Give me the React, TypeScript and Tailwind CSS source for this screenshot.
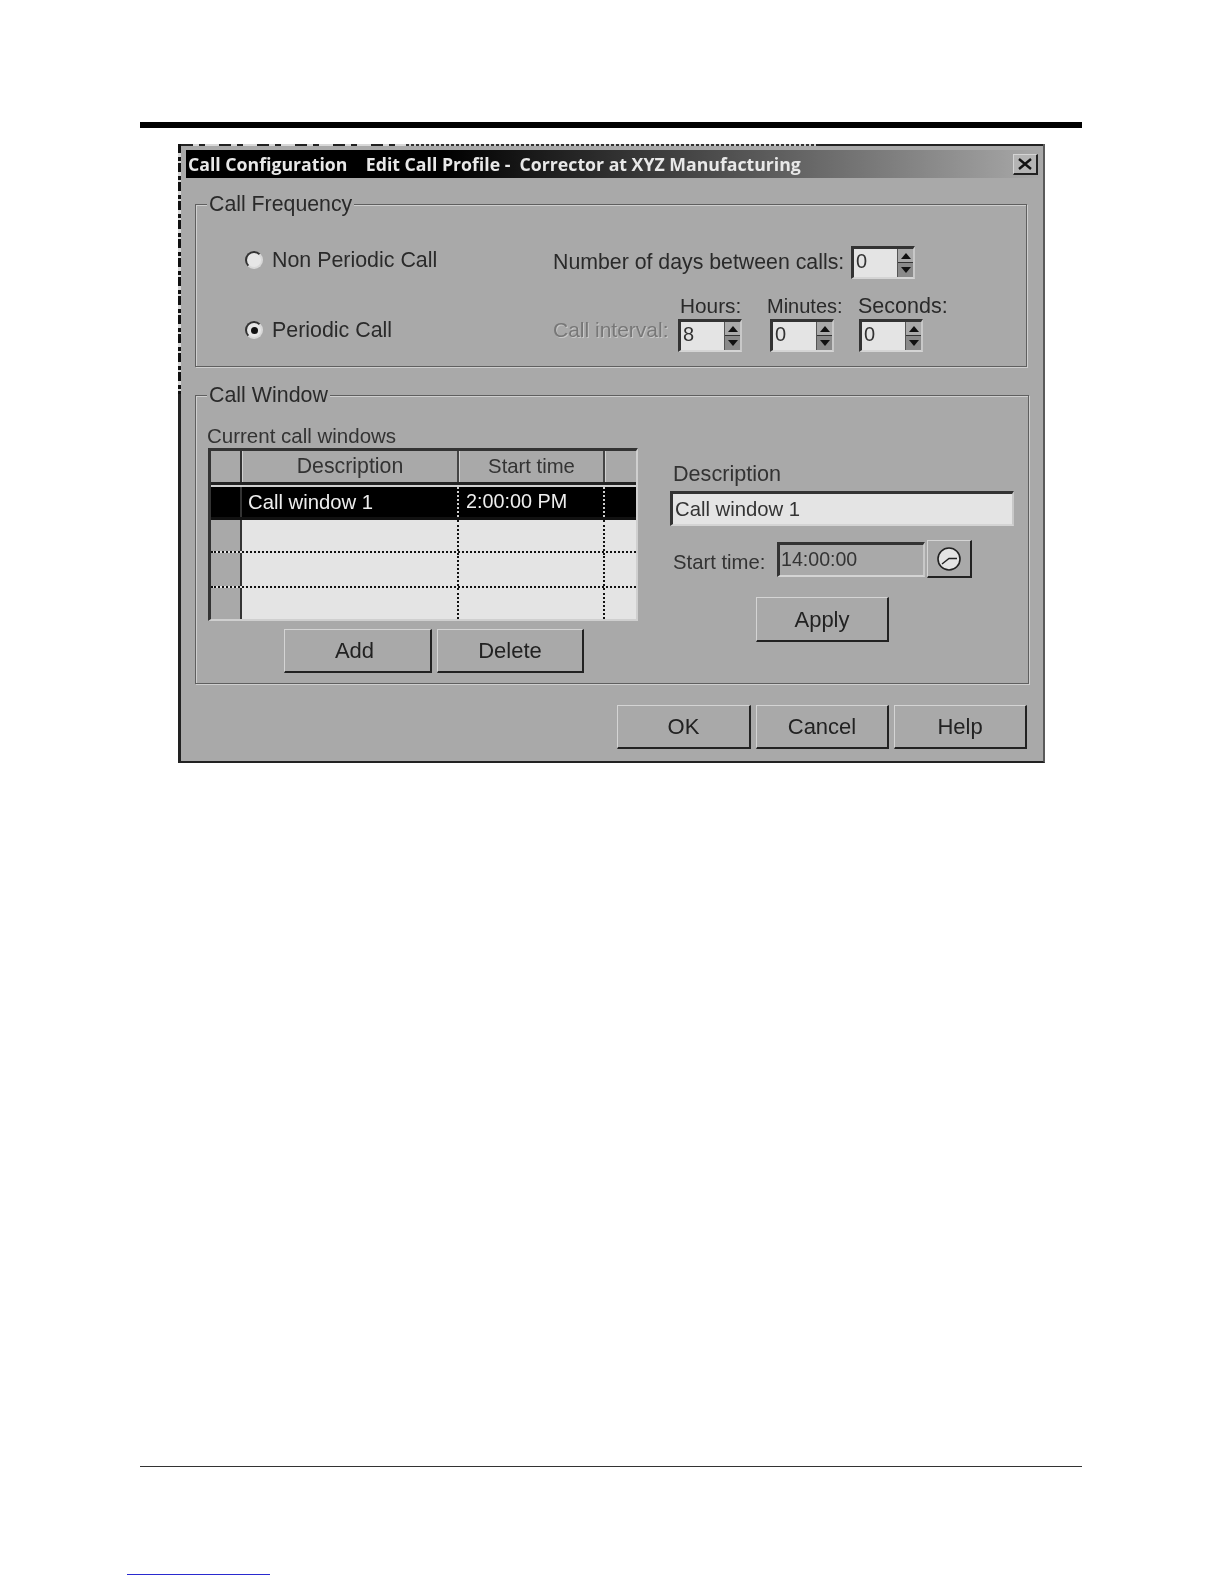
import type { ReactNode } from "react";

const bevelOut =
  "border border-t-[#d4d4d4] border-l-[#d4d4d4] border-r-[#222] border-b-[#222] border-b-2 border-r-2";
const sunken =
  "border-t-[3px] border-l-[3px] border-r-2 border-b-2 border-t-[#333] border-l-[#333] border-r-[#c8c8c8] border-b-[#d4d4d4]";

const emptyRows = ["h-[33px] border-b-2", "h-[35px] border-b-2", "h-[31px]"];

function Button({ label, className }: { label: string; className: string }) {
  return (
    <button
      type="button"
      className={`flex items-center justify-center bg-[#a9a9a9] text-[22px] text-[#222] ${bevelOut} ${className}`}
    >
      {label}
    </button>
  );
}

function Group({
  title,
  titleSize,
  className,
  children,
}: {
  title: string;
  titleSize: string;
  className: string;
  children: ReactNode;
}) {
  return (
    <fieldset
      className={`relative border border-[#5f5f5f] shadow-[inset_1px_1px_0_#cfcfcf,1px_1px_0_#cfcfcf] ${className}`}
    >
      <span className={`absolute -top-[14px] left-[11px] bg-[#a9a9a9] px-[2px] leading-[26px] text-[#2a2a2a] ${titleSize}`}>
        {title}
      </span>
      {children}
    </fieldset>
  );
}

function Spinner({ value }: { value: string }) {
  return (
    <div className={`flex h-[33px] w-[64px] items-stretch bg-[#e4e4e4] ${sunken}`}>
      <span className="flex-1 pl-[2px] text-[20px] leading-[24px] text-[#333]">{value}</span>
      <div className="flex w-[16px] flex-col border-l border-[#555] bg-[#a9a9a9]">
        <span className="flex h-1/2 items-center justify-center border-b border-[#333]">
          <svg width="10" height="6" viewBox="0 0 10 6">
            <path d="M5 0 L10 6 H0 Z" fill="#111" />
          </svg>
        </span>
        <span className="flex h-1/2 items-center justify-center bg-[#8a8a8a]">
          <svg width="10" height="6" viewBox="0 0 10 6">
            <path d="M0 0 H10 L5 6 Z" fill="#111" />
          </svg>
        </span>
      </div>
    </div>
  );
}

function Radio({ checked, label }: { checked?: boolean; label: string }) {
  return (
    <div className="flex items-center">
      <span className="relative flex h-[18px] w-[18px] items-center justify-center rounded-full border-2 border-t-[#333] border-l-[#333] border-r-[#d8d8d8] border-b-[#d8d8d8] bg-[#e6e6e6]">
        {checked && <span className="h-[7px] w-[7px] rounded-full bg-[#111]" />}
      </span>
      <span className="ml-[9px] text-[21.4px] leading-[26px] text-[#2a2a2a]">{label}</span>
    </div>
  );
}

function TimeField({
  label,
  value,
  width,
  labelClass,
}: {
  label: string;
  value: string;
  width: string;
  labelClass: string;
}) {
  return (
    <div className={`flex flex-col ${width}`}>
      <span className={`mb-[1px] h-[24px] whitespace-nowrap leading-[24px] text-[#2a2a2a] ${labelClass}`}>
        {label}
      </span>
      <Spinner value={value} />
    </div>
  );
}

function CallTable() {
  return (
    <div className="ml-[1px] h-[173px] w-[430px] border-t-[3px] border-l-[3px] border-r-2 border-b-2 border-t-[#333] border-l-[#333] border-r-[#cfcfcf] border-b-[#cfcfcf] bg-[#e4e4e4] text-[20.3px]">
      <div className="flex h-[34px] border-b-[3px] border-[#222] bg-[#a9a9a9] text-[#333]">
        <div className="w-[31px] border-r-2 border-[#333]" />
        <div className="flex w-[217px] items-center justify-center border-r-2 border-r-[#444] border-l border-l-[#d0d0d0] text-[21.3px]">
          Description
        </div>
        <div className="flex w-[146px] items-center justify-center border-r-2 border-r-[#444] border-l border-l-[#d0d0d0]">
          Start time
        </div>
        <div className="flex-1 border-l border-[#d0d0d0]" />
      </div>
      <div className="flex h-[35px] border-t-2 border-b-[3px] border-t-[#d0d0d0] border-b-[#111] bg-black text-[#eee]">
        <div className="w-[31px] border-r-2 border-[#333]" />
        <div className="flex w-[217px] items-center border-r-2 border-dotted border-[#ccc] pl-[6px]">Call window 1</div>
        <div className="flex w-[146px] items-center border-r-2 border-dotted border-[#ccc] pl-[7px] text-[19.8px]">
          2:00:00 PM
        </div>
        <div className="flex-1" />
      </div>
      {emptyRows.map((row) => (
        <div key={row} className={`flex border-dotted border-[#111] ${row}`}>
          <div className="w-[31px] border-r-2 border-[#333] bg-[#a9a9a9]" />
          <div className="w-[217px] border-r-2 border-dotted border-[#111]" />
          <div className="w-[146px] border-r-2 border-dotted border-[#111]" />
          <div className="flex-1" />
        </div>
      ))}
    </div>
  );
}

function ClockIcon() {
  return (
    <svg width="26" height="26" viewBox="0 0 26 26">
      <circle cx="13" cy="13" r="11" fill="#e4e4e4" stroke="#222" strokeWidth="1.6" />
      <path d="M6 18 L13 12.5 H21" fill="none" stroke="#222" strokeWidth="1.4" />
    </svg>
  );
}

export default function App() {
  return (
    <div className="relative h-[1584px] w-[1224px] bg-white font-['Liberation_Sans',Arial,sans-serif]">
      <div className="flex flex-col pt-[122px]">
        <div className="ml-[140px] h-[6px] w-[942px] bg-black" />

        <div className="relative mt-[16px] ml-[178px] h-[619px] w-[867px] border-r-2 border-b-2 border-r-[#5a5a5a] border-b-[#222] bg-[#a9a9a9] pt-[6px] pl-[8px] blur-[0.4px]">
          {/* torn capture edge of the window behind */}
          <div className="absolute top-0 left-0 h-[250px] w-[3px] bg-[repeating-linear-gradient(180deg,#111_0_9px,#d8d8d8_9px_13px,#111_13px_17px,#d8d8d8_17px_19px)]" />
          <div className="absolute top-[250px] bottom-0 left-0 w-[3px] bg-[#222]" />
          <div className="absolute top-0 left-[3px] h-[2px] w-[225px] bg-[repeating-linear-gradient(90deg,#222_0_12px,#d8d8d8_12px_18px,#222_18px_24px,#d8d8d8_24px_38px)]" />
          <div className="absolute top-0 left-[228px] h-[2px] w-[410px] bg-[repeating-linear-gradient(90deg,#333_0_3px,#cfcfcf_3px_5px)]" />
          <div className="absolute top-0 right-0 left-[638px] h-[2px] bg-[#222]" />

          <div className="flex h-[28px] w-[857px] items-center justify-between bg-[linear-gradient(90deg,#000_0%,#000_30%,#a9a9a9_100%)] pr-[5px] pl-[2px]">
            <span className="font-['Open_Sans',sans-serif] text-[17.7px] font-bold whitespace-pre text-[#e8e8e8]">
              {"Call Configuration    Edit Call Profile -  Corrector at XYZ Manufacturing"}
            </span>
            <span className={`flex h-[21px] w-[25px] items-center justify-center bg-[#b4b4b4] ${bevelOut}`}>
              <svg width="14" height="12" viewBox="0 0 14 12">
                <path d="M1 1 L13 11 M13 1 L1 11" stroke="#111" strokeWidth="2.4" />
              </svg>
            </span>
          </div>

          <Group title="Call Frequency" titleSize="text-[21.3px]" className="mt-[26px] ml-[9px] h-[163px] w-[832px]">
            <div className="mt-[41px] ml-[49px] flex h-[33px] items-center">
              <div className="mb-[6px] w-[308px]">
                <Radio label="Non Periodic Call" />
              </div>
              <span className="w-[298px] whitespace-nowrap text-[21.3px] text-[#2a2a2a]">
                Number of days between calls:
              </span>
              <Spinner value="0" />
            </div>
            <div className="mt-[15px] ml-[49px] flex items-end">
              <div className="mb-[6px] flex h-[32px] w-[308px] items-center">
                <Radio checked label="Periodic Call" />
              </div>
              <span className="mb-[6px] flex h-[32px] w-[125px] items-center whitespace-nowrap text-[21px] text-[#777] [text-shadow:1px_1px_0_#c8c8c8]">
                Call interval:
              </span>
              <TimeField label="Hours:" value="8" width="w-[92px]" labelClass="ml-[2px] text-[20.8px]" />
              <TimeField label="Minutes:" value="0" width="w-[89px]" labelClass="-ml-[3px] text-[20px]" />
              <TimeField label="Seconds:" value="0" width="w-[90px]" labelClass="-ml-[1px] text-[21.5px]" />
            </div>
          </Group>

          <Group title="Call Window" titleSize="text-[21.4px]" className="mt-[28px] ml-[9px] h-[289px] w-[834px]">
            <div className="flex">
              <div className="ml-[11px] flex w-[463px] flex-col">
                <span className="mt-[28px] h-[24px] text-[20.5px] leading-[24px] text-[#333]">Current call windows</span>
                <CallTable />
                <div className="mt-[8px] ml-[77px] flex gap-[5px]">
                  <Button label="Add" className="h-[44px] w-[148px] pr-[6px]" />
                  <Button label="Delete" className="h-[44px] w-[147px]" />
                </div>
              </div>
              <div className="flex flex-col">
                <span className="mt-[65px] ml-[3px] h-[26px] text-[21.6px] leading-[26px] text-[#333]">Description</span>
                <div className={`mt-[4px] flex h-[35px] w-[344px] items-center bg-[#e4e4e4] pl-[2px] text-[20.3px] text-[#333] ${sunken}`}>
                  Call window 1
                </div>
                <div className="mt-[14px] flex items-center">
                  <span className="mt-[7px] ml-[3px] w-[104px] text-[20.3px] text-[#333]">Start time:</span>
                  <div className={`flex h-[35px] w-[148px] items-center pl-[1px] text-[19.6px] text-[#333] ${sunken}`}>
                    14:00:00
                  </div>
                  <span className={`ml-[2px] flex h-[38px] w-[45px] items-center justify-center ${bevelOut}`}>
                    <ClockIcon />
                  </span>
                </div>
                <Button label="Apply" className="mt-[19px] ml-[86px] h-[45px] w-[133px]" />
              </div>
            </div>
          </Group>

          <div className="mt-[21px] ml-[431px] flex gap-[5px]">
            <Button label="OK" className="h-[44px] w-[134px]" />
            <Button label="Cancel" className="h-[44px] w-[133px]" />
            <Button label="Help" className="h-[44px] w-[133px]" />
          </div>
        </div>

        <div className="mt-[703px] ml-[140px] h-px w-[942px] bg-[#333]" />
        <div className="mt-[107px] ml-[127px] h-px w-[143px] bg-[#2a2ad0]" />
      </div>
    </div>
  );
}
